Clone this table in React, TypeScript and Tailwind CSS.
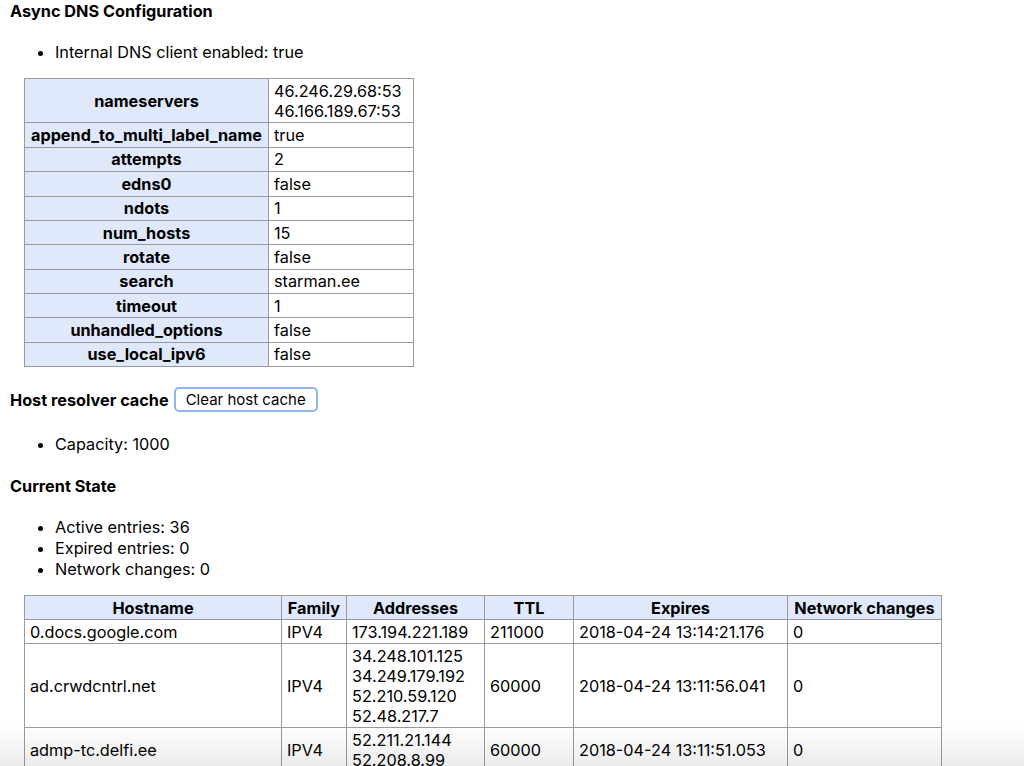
const config: [string, string[]][] = [
  ["nameservers", ["46.246.29.68:53", "46.166.189.67:53"]],
  ["append_to_multi_label_name", ["true"]],
  ["attempts", ["2"]],
  ["edns0", ["false"]],
  ["ndots", ["1"]],
  ["num_hosts", ["15"]],
  ["rotate", ["false"]],
  ["search", ["starman.ee"]],
  ["timeout", ["1"]],
  ["unhandled_options", ["false"]],
  ["use_local_ipv6", ["false"]],
]

const entries = [
  {
    host: "0.docs.google.com",
    family: "IPV4",
    addresses: ["173.194.221.189"],
    ttl: "211000",
    expires: "2018-04-24 13:14:21.176",
    changes: "0",
  },
  {
    host: "ad.crwdcntrl.net",
    family: "IPV4",
    addresses: ["34.248.101.125", "34.249.179.192", "52.210.59.120", "52.48.217.7"],
    ttl: "60000",
    expires: "2018-04-24 13:11:56.041",
    changes: "0",
  },
  {
    host: "admp-tc.delfi.ee",
    family: "IPV4",
    addresses: ["52.211.21.144", "52.208.8.99"],
    ttl: "60000",
    expires: "2018-04-24 13:11:51.053",
    changes: "0",
  },
]

const th = "border border-[#9a9a9a] bg-[#dfe9fb] px-[5px] py-[1.5px] font-bold text-center"
const td = "border border-[#9a9a9a] px-[5px] py-[1.5px] text-left"

export default function App() {
  return (
    <div className="relative h-[766px] overflow-hidden bg-white px-[10px] text-[16.25px] leading-[20px] text-black [font-family:Inter,'Liberation_Sans',Arial,sans-serif]">
      <h4 className="pt-[1px] font-bold">Async DNS Configuration</h4>
      <ul className="mt-[21px] list-disc pl-[45px]">
        <li>Internal DNS client enabled: true</li>
      </ul>

      {/* config table */}
      <table className="mt-[16px] ml-[14px] w-[390px] border-collapse">
        <tbody>
          {config.map(([k, v]) => (
            <tr key={k}>
              <th className={`${th} w-[244px] py-[1.7px]`}>{k}</th>
              <td className={`${td} py-[1.7px]`}>
                {v.map((line) => (
                  <div key={line}>{line}</div>
                ))}
              </td>
            </tr>
          ))}
        </tbody>
      </table>

      <div className="mt-[20px] flex items-center gap-[5px]">
        <h4 className="font-bold">Host resolver cache</h4>
        <button className="h-[25px] rounded-[5px] border-2 border-[#8fb7ee] bg-white px-[10px] text-[15px] leading-[18px]">
          Clear host cache
        </button>
      </div>
      <ul className="mt-[22px] list-disc pl-[45px]">
        <li>Capacity: 1000</li>
      </ul>

      <h4 className="mt-[22px] font-bold">Current State</h4>
      <ul className="mt-[21px] list-disc pl-[45px] leading-[21px]">
        <li>Active entries: 36</li>
        <li>Expired entries: 0</li>
        <li>Network changes: 0</li>
      </ul>

      {/* cache entries */}
      <table className="mt-[15px] ml-[14px] w-[918px] border-collapse">
        <thead>
          <tr>
            <th className={`${th} w-[257px]`}>Hostname</th>
            <th className={`${th} w-[65px]`}>Family</th>
            <th className={`${th} w-[138px]`}>Addresses</th>
            <th className={`${th} w-[89px]`}>TTL</th>
            <th className={`${th} w-[214px]`}>Expires</th>
            <th className={th}>Network changes</th>
          </tr>
        </thead>
        <tbody>
          {entries.map((e) => (
            <tr key={e.host}>
              <td className={td}>{e.host}</td>
              <td className={td}>{e.family}</td>
              <td className={td}>
                {e.addresses.map((a) => (
                  <div key={a}>{a}</div>
                ))}
              </td>
              <td className={td}>{e.ttl}</td>
              <td className={td}>{e.expires}</td>
              <td className={td}>{e.changes}</td>
            </tr>
          ))}
        </tbody>
      </table>

      <div className="pointer-events-none absolute inset-x-0 bottom-0 h-[42px] bg-gradient-to-b from-transparent to-[#00000014]" />
    </div>
  )
}
